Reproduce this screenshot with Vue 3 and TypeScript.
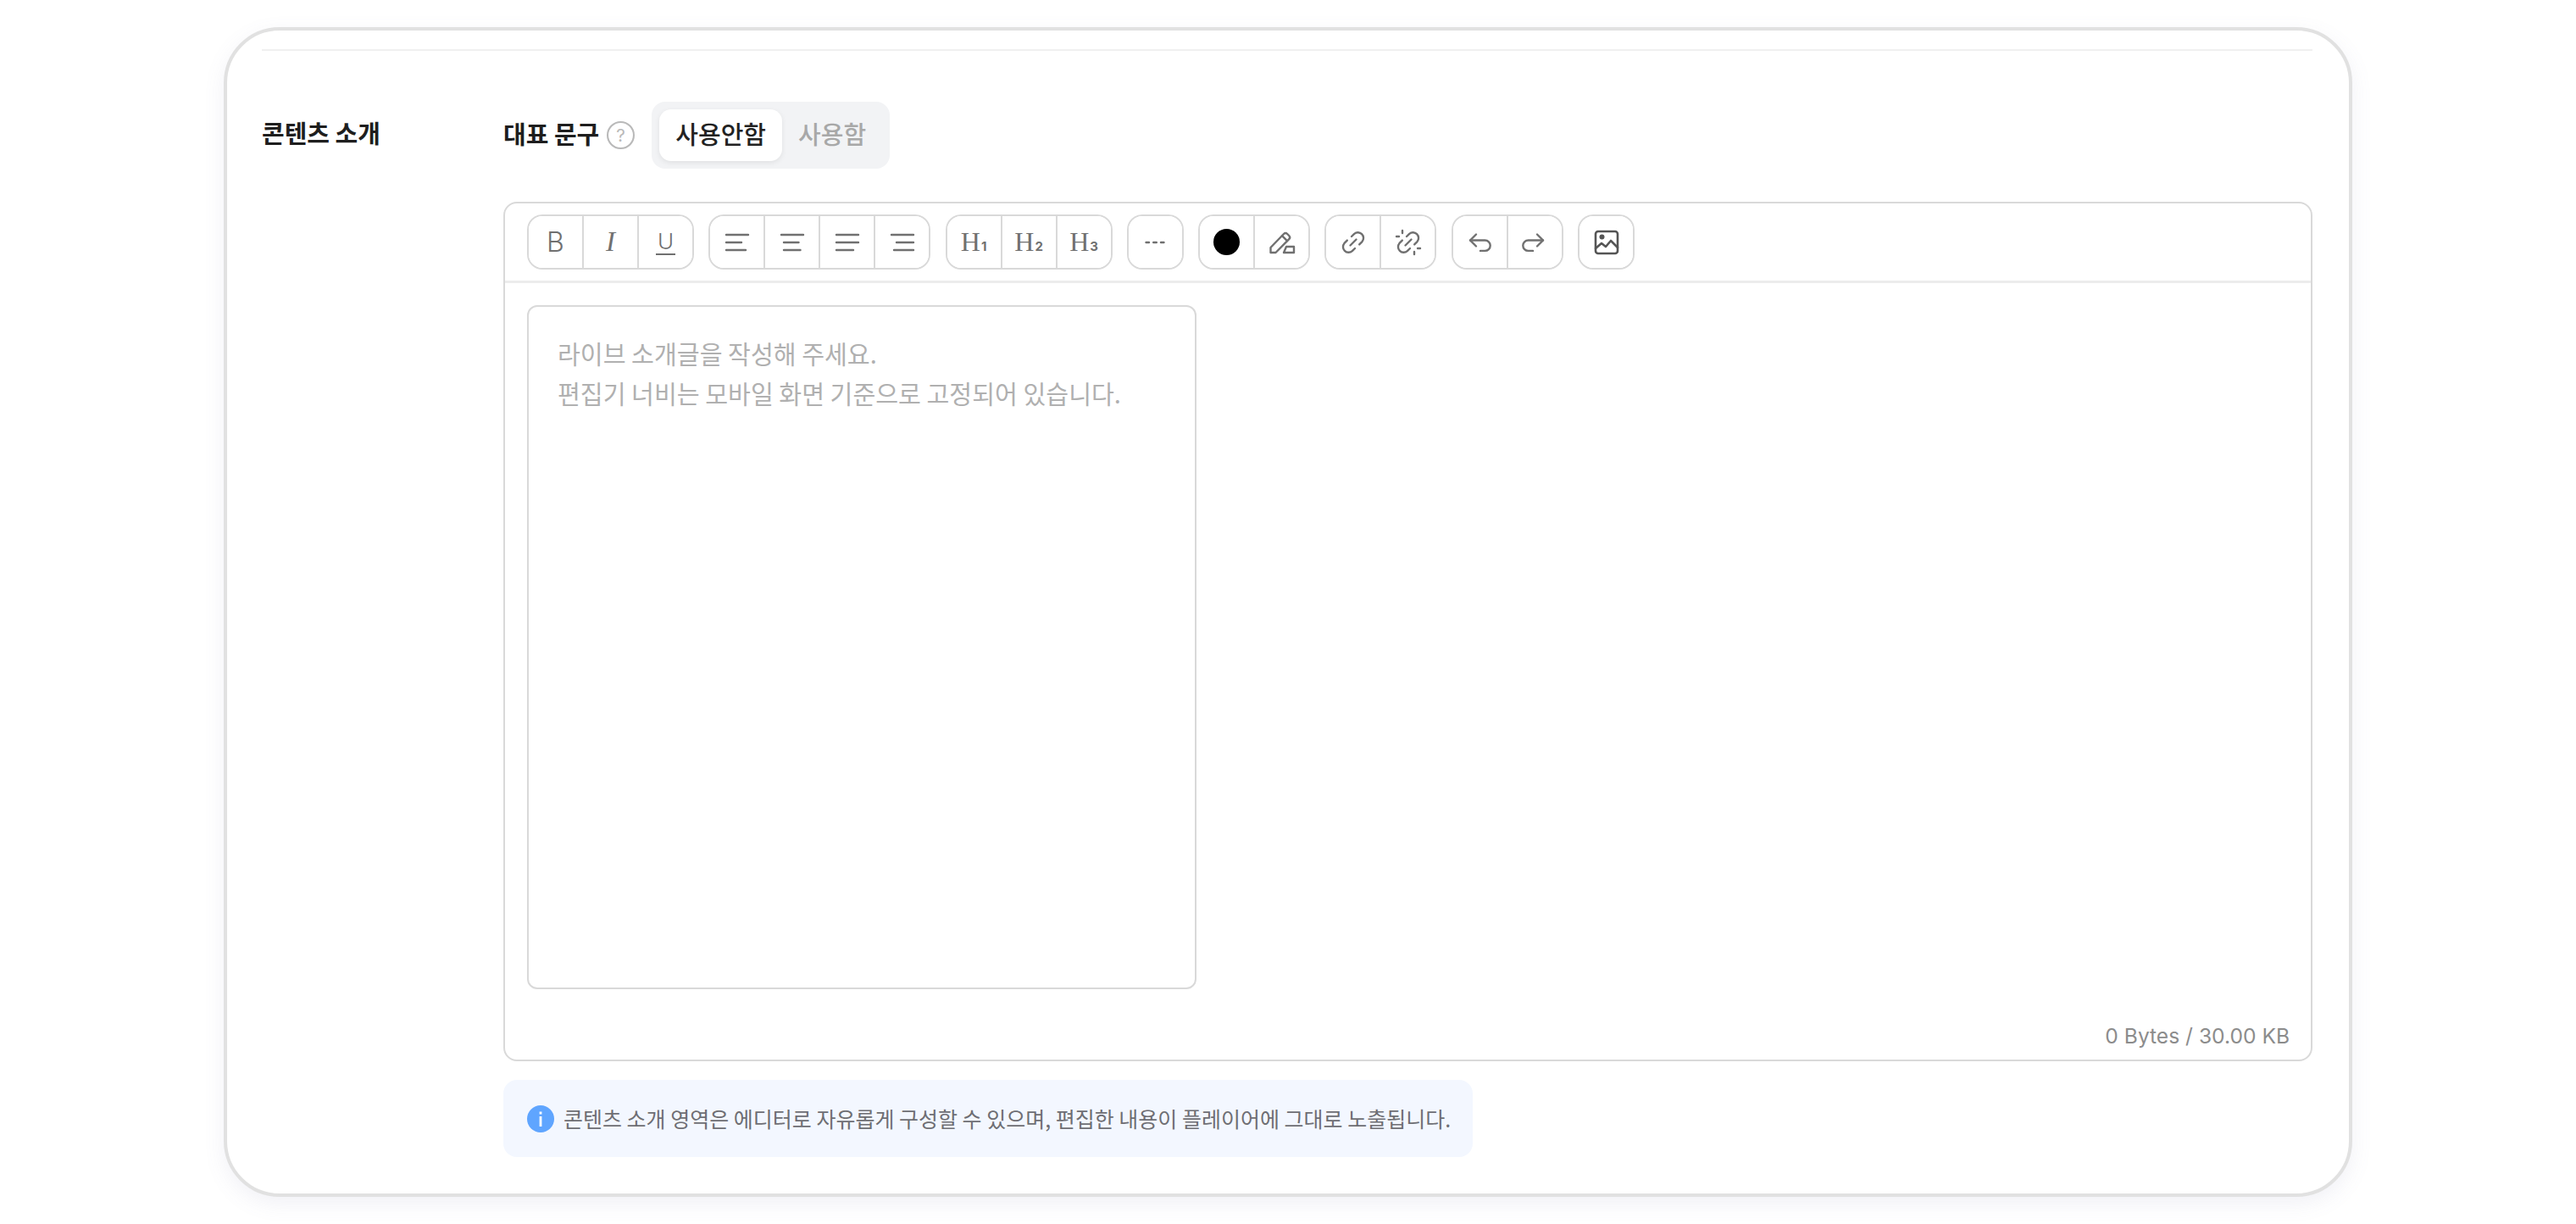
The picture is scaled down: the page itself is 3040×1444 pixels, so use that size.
<script setup lang="ts">
type ToolButton = {
  key: string;
  text?: string;
  sub?: string;
  cls?: string;
  paths?: string[];
  dot?: [number, number, number];
  swatch?: boolean;
};

const linkArcs = [
  "M14 9l3.2-3.2a6.6 6.6 0 0 1 9.3 9.3L23.2 18.4",
  "M18 23l-3.2 3.2a6.6 6.6 0 0 1-9.3-9.3L8.8 13.6",
  "M12.5 19.5l7-7",
];

const toolbar: ToolButton[][] = [
  [
    { key: "bold", text: "B", cls: "t-bold" },
    { key: "italic", text: "I", cls: "t-italic" },
    { key: "underline", text: "U", cls: "t-under" },
  ],
  [
    { key: "left", paths: ["M3 7H29", "M3 16H21", "M3 25H26"] },
    { key: "center", paths: ["M3 7H29", "M6 16H23.5", "M6 25H25.5"] },
    { key: "justify", paths: ["M3 7H29", "M3 16H29", "M3 25H23"] },
    { key: "right", paths: ["M3 7H29", "M9 16H29", "M6 25H29"] },
  ],
  [
    { key: "h1", text: "H", sub: "1", cls: "t-head" },
    { key: "h2", text: "H", sub: "2", cls: "t-head" },
    { key: "h3", text: "H", sub: "3", cls: "t-head" },
  ],
  [{ key: "more", paths: ["M5.5 16H9", "M14.2 16H17.8", "M23 16H26.5"] }],
  [
    { key: "color", swatch: true },
    {
      key: "highlight",
      paths: [
        "M2.5 28v-6L18 6a3 3 0 0 1 4.2 0l2 2a3 3 0 0 1 0 4.2L8.5 28Z",
        "M16 8.2l6 6",
        "M18 28l3-7h9v7Z",
      ],
    },
  ],
  [
    { key: "link", paths: linkArcs },
    {
      key: "unlink",
      paths: [...linkArcs, "M9 2v3", "M2 9h3", "M27 23h3", "M23 27v3"],
    },
  ],
  [
    { key: "undo", paths: ["M12 6.5L5 13.5l7 7", "M5 13.5H22.5a6.2 6.2 0 0 1 0 12.4H17"] },
    { key: "redo", paths: ["M19 6.5l7 7-7 7", "M26 13.5H8.5a6.2 6.2 0 0 0 0 12.4H14"] },
  ],
  [
    {
      key: "image",
      cls: "dark",
      paths: ["M6 3H26a3 3 0 0 1 3 3V26a3 3 0 0 1-3 3H6a3 3 0 0 1-3-3V6a3 3 0 0 1 3-3Z", "M3 23l7-6 5 4 6-7 8 8"],
      dot: [10.5, 9.5, 3],
    },
  ],
];
</script>

<template>
  <div class="page">
    <section class="card">
      <div class="divider"></div>
      <div class="row">
        <div class="row-label">콘텐츠 소개</div>
        <div class="row-body">
          <div class="headline">
            <span class="headline-label">대표 문구</span>
            <svg class="help" width="33" height="33" viewBox="0 0 32 32">
              <circle cx="16" cy="16" r="15" fill="none" stroke="#b9b9b9" stroke-width="2" />
              <text x="16" y="23" text-anchor="middle" class="help-mark">?</text>
            </svg>
            <div class="toggle">
              <button class="toggle-item active">사용안함</button>
              <button class="toggle-item">사용함</button>
            </div>
          </div>

          <div class="editor">
            <div class="toolbar">
              <div v-for="(group, i) in toolbar" :key="i" class="tool-group">
                <button v-for="b in group" :key="b.key" class="tool" :class="b.cls">
                  <span v-if="b.swatch" class="swatch"></span>
                  <template v-else-if="b.text">
                    <span>{{ b.text }}</span><small v-if="b.sub">{{ b.sub }}</small>
                  </template>
                  <svg v-else width="32" height="32" viewBox="0 0 32 32" fill="none">
                    <path v-for="d in b.paths" :key="d" :d="d" />
                    <circle v-if="b.dot" :cx="b.dot[0]" :cy="b.dot[1]" :r="b.dot[2]" class="dot" />
                  </svg>
                </button>
              </div>
            </div>
            <div class="editor-body">
              <div class="sheet">
                <p>라이브 소개글을 작성해 주세요.</p>
                <p>편집기 너비는 모바일 화면 기준으로 고정되어 있습니다.</p>
              </div>
            </div>
            <div class="counter">0 Bytes / 30.00 KB</div>
          </div>

          <div class="notice">
            <svg width="32" height="32" viewBox="0 0 32 32">
              <circle cx="16" cy="16" r="16" fill="#5fa5ff" />
              <rect x="14.6" y="13" width="2.8" height="12" fill="#fff" />
              <rect x="14.6" y="7.5" width="2.8" height="3" fill="#fff" />
            </svg>
            <span class="notice-text">콘텐츠 소개 영역은 에디터로 자유롭게 구성할 수 있으며, 편집한 내용이 플레이어에 그대로 노출됩니다.</span>
          </div>
        </div>
      </div>
    </section>
  </div>
</template>

<style>
html,
body {
  background: #fff;
}
</style>

<style scoped>
.page {
  padding: 32px 264px;
  font-family: "Noto Sans CJK KR", "Noto Sans", sans-serif;
}
.card {
  box-sizing: border-box;
  width: 2512px;
  height: 1380px;
  padding: 22px 43px 43px 41px;
  border: 4px solid #e1e1e1;
  border-radius: 66px;
  background: #fff;
  box-shadow: 0 8px 24px rgba(120, 120, 170, 0.1);
}
.divider {
  height: 2px;
  background: #f0f0f0;
}
.row {
  display: grid;
  grid-template-columns: 285px 1fr;
  margin-top: 60px;
}
.row-label {
  font-size: 29px;
  font-weight: 700;
  line-height: 72px;
  color: #1e1e1e;
}
.headline {
  display: flex;
  align-items: center;
  height: 79px;
}
.headline-label {
  font-size: 29px;
  font-weight: 700;
  margin-top: -6px;
  color: #1e1e1e;
}
.help {
  margin-left: 9px;
}
.help-mark {
  font-family: "Inter", sans-serif;
  font-size: 20px;
  fill: #b9b9b9;
}
.toggle {
  display: flex;
  margin-left: 20px;
  padding: 9px;
  border-radius: 16px;
  background: #f2f3f5;
}
.toggle-item {
  height: 61px;
  padding: 0 19px 5px;
  border: 0;
  border-radius: 14px;
  background: transparent;
  font: 500 29px "Noto Sans CJK KR", sans-serif;
  color: #a8a8a8;
}
.toggle-item.active {
  background: #fff;
  color: #222;
  box-shadow: 0 2px 6px rgba(0, 0, 0, 0.08);
}
.editor {
  box-sizing: border-box;
  height: 1014px;
  margin-top: 39px;
  border: 2px solid #d9d9d9;
  border-radius: 16px;
  display: flex;
  flex-direction: column;
}
.toolbar {
  box-sizing: border-box;
  display: flex;
  gap: 17.3px;
  height: 94px;
  padding: 13px 26px;
  border-bottom: 3px solid #ececec;
}
.tool-group {
  box-sizing: border-box;
  display: flex;
  height: 65px;
  border: 2px solid #d9d9d9;
  border-radius: 18px;
  overflow: hidden;
}
.tool {
  box-sizing: content-box;
  width: 63px;
  padding: 0;
  border: 0;
  border-left: 2px solid #d9d9d9;
  background: #fff;
  display: flex;
  align-items: center;
  justify-content: center;
  color: #707070;
}
.tool:first-child {
  border-left: 0;
}
.tool svg {
  stroke: #707070;
  stroke-width: 2.4;
  stroke-linecap: round;
  stroke-linejoin: round;
}
.tool.dark svg {
  stroke: #555;
  stroke-width: 2.6;
}
.dot {
  fill: #555;
  stroke: none;
}
.swatch {
  width: 31px;
  height: 31px;
  border-radius: 50%;
  background: #000;
}
.t-bold {
  font: 300 32px "Inter", sans-serif;
}
.t-italic {
  font: italic 400 33px "Liberation Serif", serif;
}
.t-under {
  font: 300 26px "Inter", sans-serif;
}
.t-under span {
  border-bottom: 2.5px solid #707070;
  line-height: 28px;
  padding: 0 2px;
}
.t-head {
  font: 400 32px "Liberation Serif", serif;
  align-items: baseline;
  padding-top: 12px;
  height: 49px;
}
.t-head small {
  font: 700 15px "Inter", sans-serif;
  margin-left: 1px;
}
.editor-body {
  flex: 1;
  padding: 26px 26px 0;
}
.sheet {
  box-sizing: border-box;
  width: 790px;
  height: 807px;
  padding: 31px 34px;
  border: 2px solid #d9d9d9;
  border-radius: 12px;
}
.sheet p {
  margin: 0;
  font-size: 29.2px;
  line-height: 47px;
  color: #b0b0b0;
}
.counter {
  padding: 0 25px 13px;
  text-align: right;
  font: 400 24.6px "Inter", sans-serif;
  color: #8c8c8c;
}
.notice {
  display: inline-flex;
  align-items: center;
  gap: 11px;
  box-sizing: border-box;
  height: 91px;
  margin-top: 22px;
  padding: 0 26px 0 28px;
  border-radius: 16px;
  background: #f3f7ff;
  font-size: 25px;
  color: #6e6e73;
}
.notice-text {
  margin-top: -2px;
}
</style>
